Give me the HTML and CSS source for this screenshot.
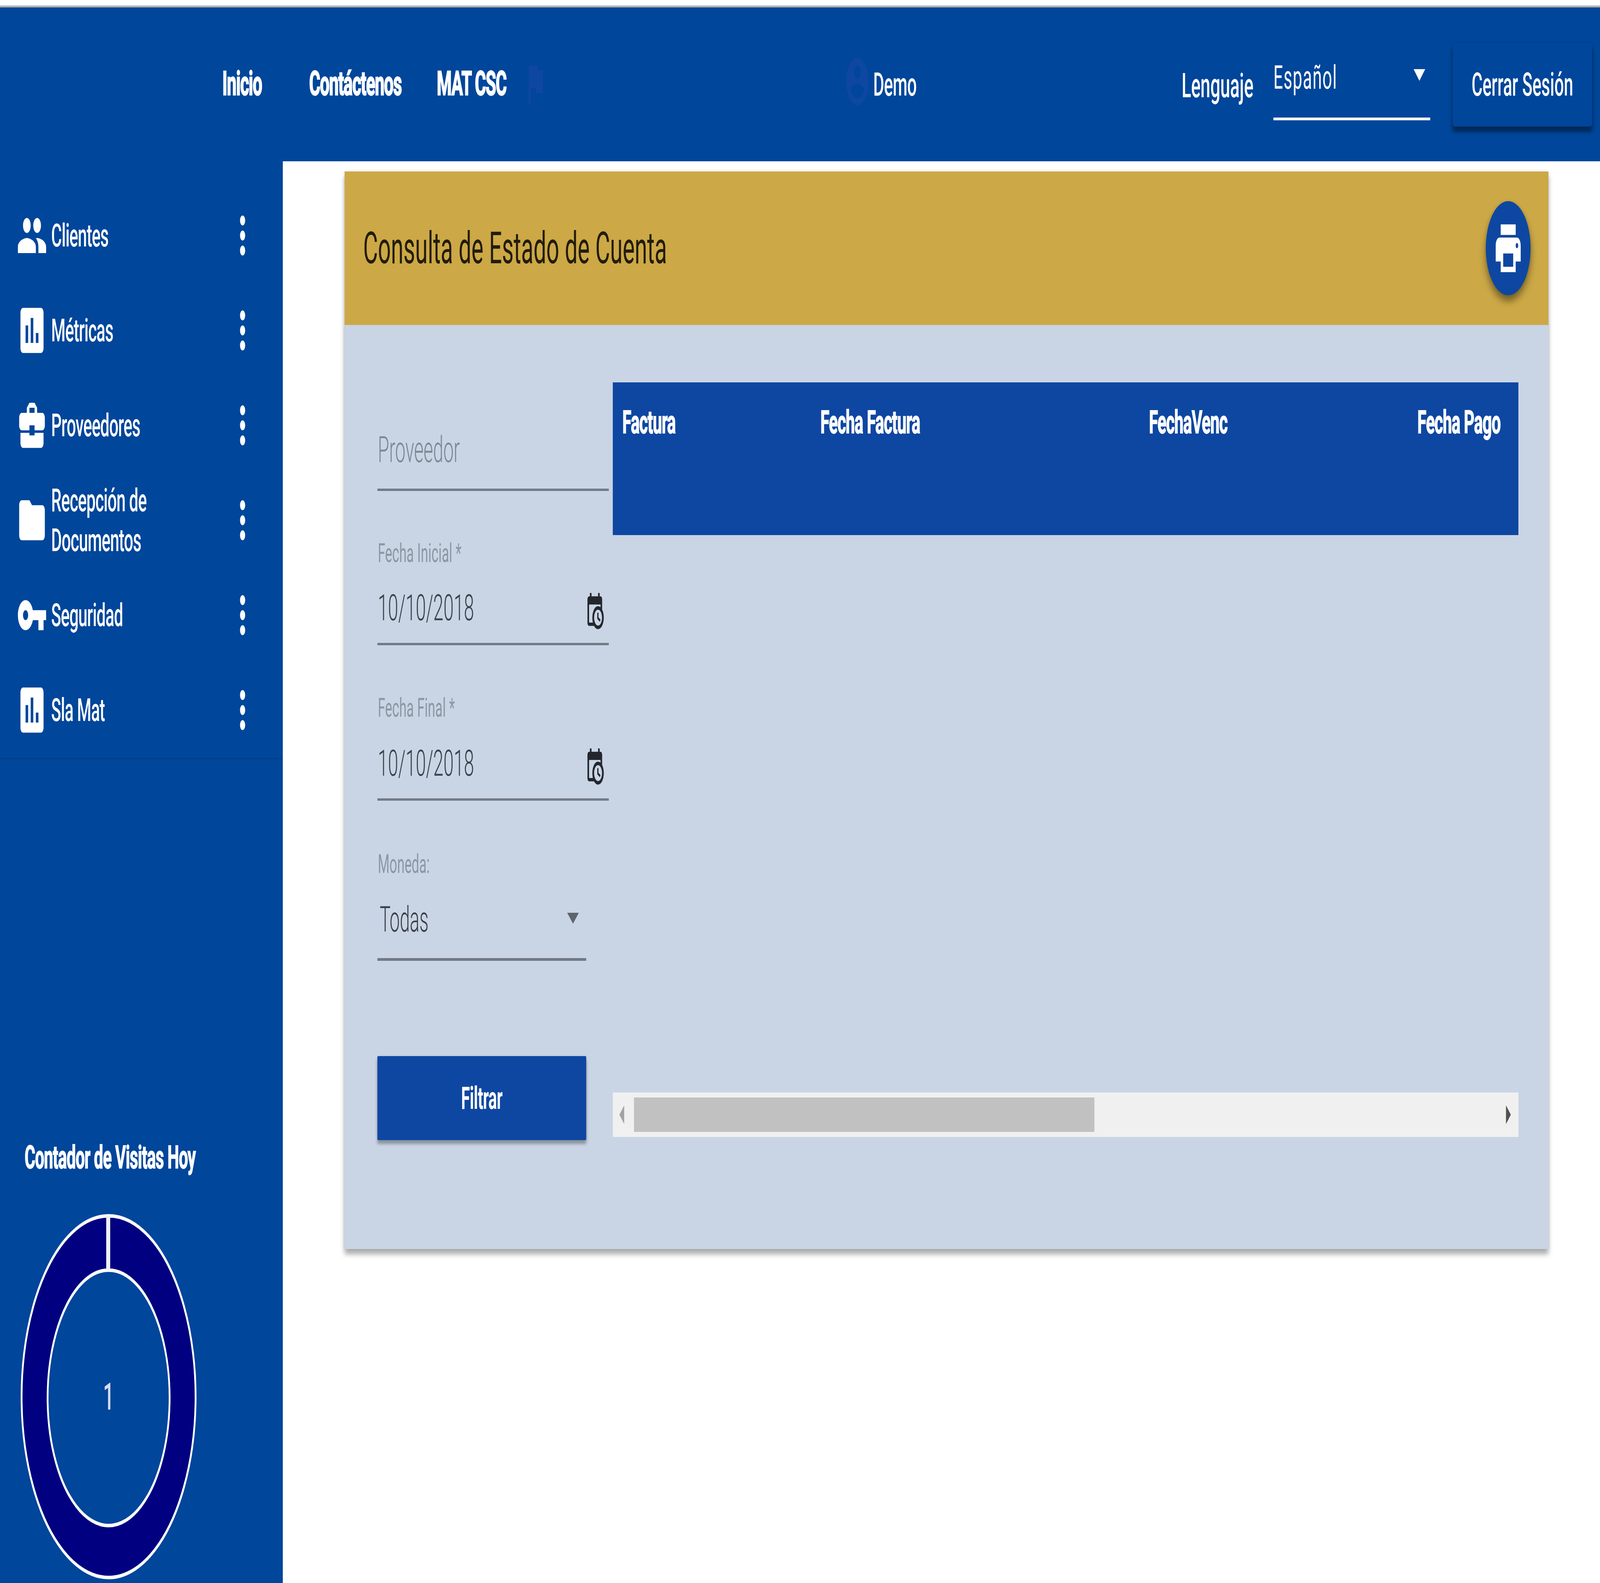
FILE: index.html
```html
<!DOCTYPE html>
<html lang="es">
<head>
<meta charset="utf-8">
<title>Consulta de Estado de Cuenta</title>
<link rel="stylesheet" href="styles.css">
</head>
<body>
<div class="frame">
<div class="page">
  <header class="topbar">
    <nav class="nav">
      <a class="nav-link nav-inicio">Inicio</a>
      <a class="nav-link nav-contact">Contáctenos</a>
      <a class="nav-link nav-mat">MAT CSC</a>
      <svg class="flag" viewBox="0 0 24 24" preserveAspectRatio="none"><path d="M14.4 6L14 4H5v17h2v-7h5.6l.4 2h7V6z"/></svg>
    </nav>
    <div class="user">
      <svg class="user-icon" viewBox="0 0 24 24" preserveAspectRatio="none"><path d="M12 2C6.48 2 2 6.48 2 12s4.48 10 10 10 10-4.48 10-10S17.52 2 12 2zm0 3c1.66 0 3 1.34 3 3s-1.34 3-3 3-3-1.34-3-3 1.34-3 3-3zm0 14.2c-2.5 0-4.71-1.28-6-3.22.03-1.99 4-3.08 6-3.08 1.99 0 5.97 1.09 6 3.08-1.29 1.94-3.5 3.22-6 3.22z"/></svg>
      <span class="user-name">Demo</span>
    </div>
    <div class="lang">
      <span class="lang-label">Lenguaje</span>
      <div class="lang-select"><span>Español</span><i class="caret caret-white"></i></div>
    </div>
    <button class="logout">Cerrar Sesión</button>
  </header>
  <div class="body-row">
    <aside class="sidebar">
      <ul class="menu">
        <li class="menu-item">
          <svg class="menu-icon" viewBox="0 0 24 24"><path d="M16 11c1.66 0 2.99-1.34 2.99-3S17.66 5 16 5c-1.66 0-3 1.34-3 3s1.34 3 3 3zm-8 0c1.66 0 2.99-1.34 2.99-3S9.66 5 8 5C6.34 5 5 6.34 5 8s1.34 3 3 3zm0 2c-2.33 0-7 1.17-7 3.5V19h14v-2.5c0-2.33-4.67-3.5-7-3.5zm8 0c-.29 0-.62.02-.97.05 1.16.84 1.97 1.97 1.97 3.45V19h6v-2.5c0-2.33-4.67-3.5-7-3.5z"/></svg>
          <span class="menu-text">Clientes</span>
          <svg class="menu-more" viewBox="0 0 24 24"><path d="M12 8c1.1 0 2-.9 2-2s-.9-2-2-2-2 .9-2 2 .9 2 2 2zm0 2c-1.1 0-2 .9-2 2s.9 2 2 2 2-.9 2-2-.9-2-2-2zm0 6c-1.1 0-2 .9-2 2s.9 2 2 2 2-.9 2-2-.9-2-2-2z"/></svg>
        </li>
        <li class="menu-item">
          <svg class="menu-icon" viewBox="0 0 24 24"><path d="M19 3H5c-1.1 0-2 .9-2 2v14c0 1.1.9 2 2 2h14c1.1 0 2-.9 2-2V5c0-1.1-.9-2-2-2zM9 17H7v-7h2v7zm4 0h-2V7h2v10zm4 0h-2v-4h2v4z"/></svg>
          <span class="menu-text">Métricas</span>
          <svg class="menu-more" viewBox="0 0 24 24"><path d="M12 8c1.1 0 2-.9 2-2s-.9-2-2-2-2 .9-2 2 .9 2 2 2zm0 2c-1.1 0-2 .9-2 2s.9 2 2 2 2-.9 2-2-.9-2-2-2zm0 6c-1.1 0-2 .9-2 2s.9 2 2 2 2-.9 2-2-.9-2-2-2z"/></svg>
        </li>
        <li class="menu-item">
          <svg class="menu-icon" viewBox="0 0 24 24"><path d="M10 16v-1H3.01L3 19c0 1.11.89 2 2 2h14c1.11 0 2-.89 2-2v-4h-7v1h-4zm10-9h-4.01V5l-2-2h-4l-2 2v2H4c-1.1 0-2 .9-2 2v3c0 1.11.89 2 2 2h6v-2h4v2h6c1.1 0 2-.9 2-2V9c0-1.1-.9-2-2-2zm-6 0h-4V5h4v2z"/></svg>
          <span class="menu-text">Proveedores</span>
          <svg class="menu-more" viewBox="0 0 24 24"><path d="M12 8c1.1 0 2-.9 2-2s-.9-2-2-2-2 .9-2 2 .9 2 2 2zm0 2c-1.1 0-2 .9-2 2s.9 2 2 2 2-.9 2-2-.9-2-2-2zm0 6c-1.1 0-2 .9-2 2s.9 2 2 2 2-.9 2-2-.9-2-2-2z"/></svg>
        </li>
        <li class="menu-item">
          <svg class="menu-icon" viewBox="0 0 24 24"><path d="M10 4H4c-1.1 0-1.99.9-1.99 2L2 18c0 1.1.9 2 2 2h16c1.1 0 2-.9 2-2V8c0-1.1-.9-2-2-2h-8l-2-2z"/></svg>
          <span class="menu-text">Recepción de<br>Documentos</span>
          <svg class="menu-more" viewBox="0 0 24 24"><path d="M12 8c1.1 0 2-.9 2-2s-.9-2-2-2-2 .9-2 2 .9 2 2 2zm0 2c-1.1 0-2 .9-2 2s.9 2 2 2 2-.9 2-2-.9-2-2-2zm0 6c-1.1 0-2 .9-2 2s.9 2 2 2 2-.9 2-2-.9-2-2-2z"/></svg>
        </li>
        <li class="menu-item">
          <svg class="menu-icon" viewBox="0 0 24 24"><path d="M12.65 10C11.83 7.67 9.61 6 7 6c-3.31 0-6 2.69-6 6s2.69 6 6 6c2.61 0 4.83-1.67 5.65-4H17v4h4v-4h2v-4H12.65zM7 14c-1.1 0-2-.9-2-2s.9-2 2-2 2 .9 2 2-.9 2-2 2z"/></svg>
          <span class="menu-text">Seguridad</span>
          <svg class="menu-more" viewBox="0 0 24 24"><path d="M12 8c1.1 0 2-.9 2-2s-.9-2-2-2-2 .9-2 2 .9 2 2 2zm0 2c-1.1 0-2 .9-2 2s.9 2 2 2 2-.9 2-2-.9-2-2-2zm0 6c-1.1 0-2 .9-2 2s.9 2 2 2 2-.9 2-2-.9-2-2-2z"/></svg>
        </li>
        <li class="menu-item">
          <svg class="menu-icon" viewBox="0 0 24 24"><path d="M19 3H5c-1.1 0-2 .9-2 2v14c0 1.1.9 2 2 2h14c1.1 0 2-.9 2-2V5c0-1.1-.9-2-2-2zM9 17H7v-7h2v7zm4 0h-2V7h2v10zm4 0h-2v-4h2v4z"/></svg>
          <span class="menu-text">Sla Mat</span>
          <svg class="menu-more" viewBox="0 0 24 24"><path d="M12 8c1.1 0 2-.9 2-2s-.9-2-2-2-2 .9-2 2 .9 2 2 2zm0 2c-1.1 0-2 .9-2 2s.9 2 2 2 2-.9 2-2-.9-2-2-2zm0 6c-1.1 0-2 .9-2 2s.9 2 2 2 2-.9 2-2-.9-2-2-2z"/></svg>
        </li>
      </ul>
      <div class="visits">
        <h3 class="visits-title">Contador de Visitas Hoy</h3>
        <div class="donut">
          <svg class="donut-svg" viewBox="0 0 880 936" preserveAspectRatio="none">
            <path class="donut-ring" fill-rule="evenodd" d="M440 5A435 463 0 1 1 439.9 5ZM440 144A305 327 0 1 0 440.1 144Z"/>
            <line class="donut-split" x1="438" y1="5" x2="438" y2="144"/>
          </svg>
          <span class="donut-value">1</span>
        </div>
      </div>
    </aside>
    <main class="content">
      <section class="card">
        <div class="card-head">
          <h2 class="card-title">Consulta de Estado de Cuenta</h2>
          <button class="fab"><svg class="fab-icon" viewBox="0 0 24 24" preserveAspectRatio="none"><path d="M19 8H5c-1.66 0-3 1.34-3 3v6h4v4h12v-4h4v-6c0-1.66-1.34-3-3-3zm-3 11H8v-5h8v5zm3-7c-.55 0-1-.45-1-1s.45-1 1-1 1 .45 1 1-.45 1-1 1zm-1-9H6v4h12V3z"/></svg></button>
        </div>
        <div class="card-body">
          <form class="filters">
            <div class="field field-supplier"><span class="placeholder">Proveedor</span></div>
            <div class="field field-date field-date-start">
              <label class="field-label">Fecha Inicial *</label>
              <div class="field-value"><span>10/10/2018</span><svg class="cal" viewBox="0 0 24 24" preserveAspectRatio="none"><path d="M15,13H16.5V15.82L18.94,17.23L18.19,18.53L15,16.69V13M19,8H5V19H9.67C9.24,18.09 9,17.07 9,16A7,7 0 0,1 16,9C17.07,9 18.09,9.24 19,9.67V8M5,21C3.89,21 3,20.1 3,19V5C3,3.89 3.89,3 5,3H6V1H8V3H16V1H18V3H19A2,2 0 0,1 21,5V11.1C22.24,12.36 23,14.09 23,16A7,7 0 0,1 16,23C14.09,23 12.36,22.24 11.1,21H5M16,11.15A4.85,4.85 0 0,0 11.15,16C11.15,18.68 13.32,20.85 16,20.85A4.85,4.85 0 0,0 20.85,16C20.85,13.32 18.68,11.15 16,11.15Z"/></svg></div>
            </div>
            <div class="field field-date field-date-end">
              <label class="field-label">Fecha Final *</label>
              <div class="field-value"><span>10/10/2018</span><svg class="cal" viewBox="0 0 24 24" preserveAspectRatio="none"><path d="M15,13H16.5V15.82L18.94,17.23L18.19,18.53L15,16.69V13M19,8H5V19H9.67C9.24,18.09 9,17.07 9,16A7,7 0 0,1 16,9C17.07,9 18.09,9.24 19,9.67V8M5,21C3.89,21 3,20.1 3,19V5C3,3.89 3.89,3 5,3H6V1H8V3H16V1H18V3H19A2,2 0 0,1 21,5V11.1C22.24,12.36 23,14.09 23,16A7,7 0 0,1 16,23C14.09,23 12.36,22.24 11.1,21H5M16,11.15A4.85,4.85 0 0,0 11.15,16C11.15,18.68 13.32,20.85 16,20.85A4.85,4.85 0 0,0 20.85,16C20.85,13.32 18.68,11.15 16,11.15Z"/></svg></div>
            </div>
            <div class="field field-currency">
              <label class="field-label">Moneda:</label>
              <div class="field-value-select"><span>Todas</span><i class="caret caret-grey"></i></div>
            </div>
            <button type="button" class="filter-btn">Filtrar</button>
          </form>
          <div class="table-wrap">
            <div class="table-head">
              <span class="th th-factura">Factura</span>
              <span class="th th-fecha">Fecha Factura</span>
              <span class="th th-venc">FechaVenc</span>
              <span class="th th-pago">Fecha Pago</span>
            </div>
            <div class="table-empty"></div>
            <div class="hscroll">
              <i class="scroll-arrow scroll-left"></i>
              <div class="scroll-track"><div class="scroll-thumb"></div></div>
              <i class="scroll-arrow scroll-right"></i>
            </div>
          </div>
        </div>
      </section>
    </main>
  </div>
</div>
</div>
</body>
</html>
```

FILE: styles.css
```css
* { box-sizing: border-box; }
html, body { margin: 0; padding: 0; width: 100%; height: 100%; overflow: hidden; background: #fff; }
body { font-family: Roboto, "Liberation Sans", sans-serif; }
.frame { width: 100vw; height: 100vh; overflow: hidden; }
.page { width: 8000px; height: 4053px; padding-top: 14px; display: flex; flex-direction: column; transform-origin: 0 0; }
/* the capture window can be narrower than the 8000px design: fit the width */
@media (max-width: 4096px) { .page { transform: scaleX(.512); } }

/* top bar */
.topbar { height: 399px; flex: none; background: #00469b; border-top: 5px solid #b3b3b3; display: flex; align-items: flex-start; color: #fff; }
.nav { display: flex; align-items: center; width: 4220px; height: 394px; padding: 0 0 0 1112px; margin-top: -2px; }
.nav-link { font-size: 85px; font-weight: 700; letter-spacing: -2px; line-height: 100px; -webkit-text-stroke: 3px #fff; }
.nav-inicio { width: 434px; }
.nav-contact { width: 638px; }
.nav-mat { width: 434px; }
.flag { width: 117px; height: 141px; fill: #0e47a1; }
.user { display: flex; align-items: center; width: 1688px; height: 394px; margin-top: -2px; }
.user-icon { width: 134px; height: 144px; fill: #0e47a1; margin: -10px 12px 0 0; }
.user-name { font-size: 84px; font-weight: 500; line-height: 100px; letter-spacing: -1px; margin-top: 6px; }
.lang { display: flex; width: 1355px; height: 394px; }
.lang-label { font-size: 88px; font-weight: 500; line-height: 100px; margin-top: 150px; width: 459px; }
.lang-select { width: 784px; height: 289px; border-bottom: 7px solid #fff; display: flex; justify-content: space-between; padding: 130px 25px 0 0; font-size: 84px; line-height: 100px; letter-spacing: 3px; }
.caret { display: block; width: 0; height: 0; border-left: 29px solid transparent; border-right: 29px solid transparent; }
.caret-white { border-top: 30px solid #fff; margin-top: 28px; }
.logout { width: 698px; height: 215px; margin-top: 90px; border: 0; background: #00469b; color: #fff; font: 500 84px/100px Roboto, sans-serif; padding: 0; box-shadow: 0 14px 14px rgba(0,0,0,.42), 0 0 8px rgba(0,0,0,.12); border-radius: 10px; }

/* layout */
.body-row { flex: 1; display: flex; min-height: 0; }
.sidebar { width: 1414px; flex: none; background: #00469b; color: #fff; display: flex; flex-direction: column; padding-top: 68px; }
.menu { list-style: none; margin: 0; padding: 0 0 1px; border-bottom: 4px solid #063f8c; }
.menu-item { height: 243px; display: flex; align-items: center; padding-left: 83px; }
.menu-icon { width: 154px; height: 154px; fill: #fff; flex: none; }
.menu-text { width: 880px; margin-left: 19px; font-size: 82px; font-weight: 500; line-height: 102px; letter-spacing: -1.5px; }
.menu-more { width: 154px; height: 154px; fill: #fff; flex: none; }

.visits { flex: 1; display: flex; flex-direction: column; padding: 967px 0 0 103px; }
.visits-title { margin: 0 0 93px 20px; font-size: 82px; line-height: 104px; font-weight: 700; letter-spacing: -1.5px; white-space: nowrap; -webkit-text-stroke: 2px #fff; }
.donut { width: 880px; height: 936px; position: relative; display: flex; align-items: center; justify-content: center; flex: none; }
.donut-svg { position: absolute; inset: 0; width: 100%; height: 100%; }
.donut-ring { fill: #000080; stroke: #fff; stroke-width: 9; }
.donut-split { stroke: #eef2f8; stroke-width: 20; }
.donut-value { position: relative; font-size: 96px; font-weight: 500; line-height: 110px; color: #d5dfee; }

/* content */
.content { flex: 1; padding: 26px 258px 0 309px; }
.card { height: 2759px; box-shadow: 0 14px 16px rgba(0,0,0,.3), 0 0 12px rgba(0,0,0,.12); background: #c9d5e5; }
.card-head { height: 393px; background: #cca846; display: flex; align-items: center; justify-content: space-between; padding: 0 89px 0 93px; }
.card-title { margin: 0; font-size: 113.5px; font-weight: 400; line-height: 130px; color: #231c0c; white-space: nowrap; }
.fab { width: 224px; height: 241px; border: 0; padding: 0; border-radius: 50%; background: #0e47a1; display: flex; align-items: center; justify-content: center; box-shadow: 0 16px 24px rgba(0,0,0,.4), 0 0 10px rgba(0,0,0,.12); }
.fab-icon { width: 150px; height: 163px; fill: #fff; }
.card-body { display: flex; padding: 147px 150px 0 164px; }

/* form */
.filters { width: 1177px; flex: none; display: flex; flex-direction: column; }
.field { display: flex; flex-direction: column; flex: none; }
.field-supplier { height: 278px; justify-content: flex-end; border-bottom: 6px solid #737a85; margin-right: 20px; }
.placeholder { font-size: 92px; line-height: 110px; color: #7f8793; margin-bottom: 44px; padding-left: 2px; font-weight: 300; }
.field-date { margin-right: 20px; }
.field-label { flex: none; font-size: 67px; line-height: 80px; color: #8e96a2; padding-left: 2px; font-weight: 400; white-space: nowrap; }
.field-value { flex: none; display: flex; justify-content: space-between; padding-left: 2px; padding-right: 21px; border-bottom: 6px solid #737a85; font-size: 92px; line-height: 110px; color: #3d434b; font-weight: 300; }
.field-date-start .field-label { margin-top: 119px; }
.field-date-start .field-value { height: 196px; padding-top: 46px; }
.field-date-end .field-label { margin-top: 120px; }
.field-date-end .field-value { height: 198px; padding-top: 48px; }
.cal { width: 98px; height: 101px; fill: #23272d; margin-top: 12px; flex: none; }
.field-currency { width: 1044px; }
.field-currency .field-label { margin-top: 122px; }
.field-value-select { flex: none; display: flex; justify-content: space-between; height: 208px; padding: 48px 37px 0 12px; border-bottom: 7px solid #737a85; color: #3a3f45; font-size: 90px; line-height: 110px; font-weight: 300; }
.caret-grey { border-top: 28px solid #5d646e; margin-top: 37px; }
.filter-btn { width: 1044px; height: 215px; margin-top: 244px; border: 0; padding: 0; background: #0e47a1; color: #fff; font: 700 80px/100px Roboto, sans-serif; letter-spacing: -1px; border-radius: 4px; box-shadow: 0 10px 10px rgba(0,0,0,.3), 0 0 8px rgba(0,0,0,.12); }

/* table */
.table-wrap { flex: 1; display: flex; flex-direction: column; }
.table-head { height: 391px; background: #0e47a1; display: flex; padding: 52px 0 0 48px; color: #fff; font-size: 82px; font-weight: 700; line-height: 100px; letter-spacing: -1.5px; -webkit-text-stroke: 2px #fff; }
.th { white-space: nowrap; }
.th-factura { width: 990px; }
.th-fecha { width: 1643px; }
.th-venc { width: 1342px; }
.table-empty { height: 1427px; }
.hscroll { height: 114px; background: #f0f0f0; display: flex; align-items: center; padding: 0 38px 0 33px; }
.scroll-track { flex: 1; height: 88px; margin-left: 49px; }
.scroll-thumb { width: 2302px; height: 88px; background: #c1c1c1; }
.scroll-arrow { display: block; width: 0; height: 0; border-top: 24px solid transparent; border-bottom: 24px solid transparent; }
.scroll-left { border-right: 24px solid #a3a3a3; }
.scroll-right { border-left: 24px solid #505050; }
```
